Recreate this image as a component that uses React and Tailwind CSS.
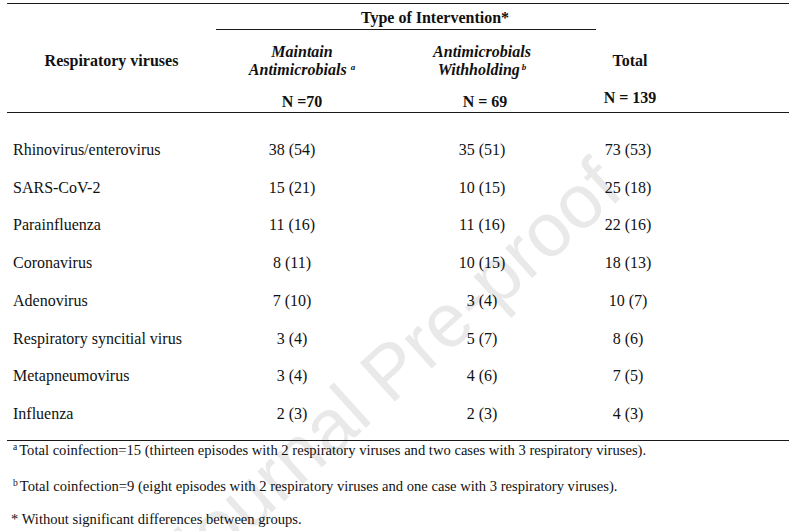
const rows = [
  ["Rhinovirus/enterovirus", "38 (54)", "35 (51)", "73 (53)"],
  ["SARS-CoV-2", "15 (21)", "10 (15)", "25 (18)"],
  ["Parainfluenza", "11 (16)", "11 (16)", "22 (16)"],
  ["Coronavirus", "8 (11)", "10 (15)", "18 (13)"],
  ["Adenovirus", "7 (10)", "3 (4)", "10 (7)"],
  ["Respiratory syncitial virus", "3 (4)", "5 (7)", "8 (6)"],
  ["Metapneumovirus", "3 (4)", "4 (6)", "7 (5)"],
  ["Influenza", "2 (3)", "2 (3)", "4 (3)"],
];

function Rule({ className = "" }) {
  return <div className={"border-t-[1.5px] border-[#1a1a1a] " + className} />;
}

export default function App() {
  return (
    <div className="relative w-[796px] h-[531px] overflow-hidden bg-white text-[#111] font-[family-name:'Liberation_Serif',serif]">
      {/* watermark */}
      <div className="absolute left-[390px] top-[371px] -translate-x-1/2 -translate-y-1/2 -rotate-[42deg] whitespace-nowrap text-[76px] leading-none text-[#e9e9e9] font-[family-name:'Liberation_Sans',sans-serif]">
        Journal Pre-proof
      </div>

      <div className="relative px-[7px] pt-[3px]">
        <Rule />

        {/* header */}
        <div className="grid grid-cols-[209px_152px_228px_64px]">
          <div className="row-span-2" />
          <div className="col-span-2 h-[25px] pt-[2px] flex items-center justify-center pl-[58px] text-[16px] font-bold">
            Type of Intervention*
          </div>
          <div className="row-span-2" />
          <Rule className="col-span-2" />
        </div>

        <div className="grid grid-cols-[209px_152px_228px_64px] text-[16px] font-bold">
          <div className="h-[61px] flex items-center justify-center">Respiratory viruses</div>
          <div className="h-[61px] flex flex-col items-center justify-center pl-[20px] leading-[18px] italic">
            <span>Maintain</span>
            <span>
              Antimicrobials <sup className="text-[9px]">a</sup>
            </span>
          </div>
          <div className="h-[61px] flex flex-col items-center justify-center leading-[18px] italic">
            <span>Antimicrobials</span>
            <span>
              Withholding<sup className="text-[9px] ml-[2px]">b</sup>
            </span>
          </div>
          <div className="h-[61px] flex items-center justify-center pl-[4px]">Total</div>

          <div className="h-[21px]" />
          <div className="h-[21px] flex items-center justify-center pl-[20px]">N =70</div>
          <div className="h-[21px] flex items-center justify-center pl-[6px]">N = 69</div>
          <div className="h-[21px] flex items-start justify-center pl-[4px] leading-[14px]">N = 139</div>
        </div>

        <Rule />

        {/* body */}
        <div className="pt-[18px] text-[16px]">
          {rows.map((r) => (
            <div key={r[0]} className="grid grid-cols-[209px_152px_228px_64px] h-[37.75px] items-center">
              <div className="pl-[6px]">{r[0]}</div>
              <div className="text-center">{r[1]}</div>
              <div className="text-center">{r[2]}</div>
              <div className="text-center">{r[3]}</div>
            </div>
          ))}
        </div>

        <Rule className="mt-[6.5px]" />

        {/* footnotes */}
        <div className="pl-[6px] text-[14.6px] leading-[16px]">
          <p className="mt-[1.5px]">
            <sup className="text-[9.5px] mr-[2px]">a</sup>Total coinfection=15 (thirteen episodes with 2 respiratory viruses and two cases with 3 respiratory viruses).
          </p>
          <p className="mt-[20px]">
            <sup className="text-[9.5px] mr-[2px]">b</sup>Total coinfection=9 (eight episodes with 2 respiratory viruses and one case with 3 respiratory viruses).
          </p>
          <p className="mt-[17px] -ml-[2px]">* Without significant differences between groups.</p>
        </div>
      </div>
    </div>
  );
}
